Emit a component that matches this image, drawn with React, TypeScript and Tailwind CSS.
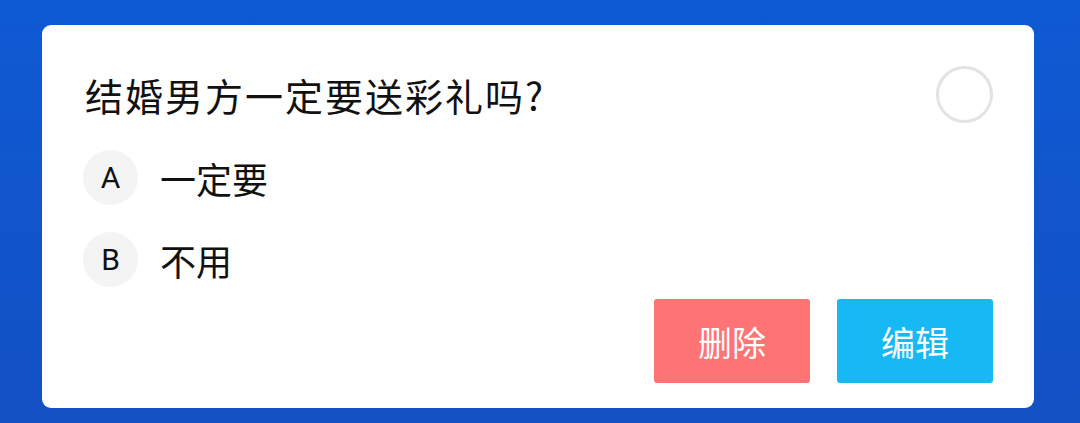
import React from 'react';

const options = [
  { key: 'A', text: '一定要' },
  { key: 'B', text: '不用' },
];

const App: React.FC = () => {
  return (
    <div
      className="w-[1080px] h-[423px] bg-gradient-to-b from-[#0e5ad3] to-[#1350c4] pt-[25px] pl-[42px] pr-[46px]"
      style={{ fontFamily: '"Noto Sans CJK SC", "Noto Sans", sans-serif' }}
    >
      <div className="h-[383px] bg-white rounded-[9px] pt-[41px] pl-[43px] pr-[41px]">
        {/* Question title */}
        <div className="flex items-center justify-between h-[57px]">
          <h2 className="text-[38px] leading-none text-[#111] tracking-[2px]">结婚男方一定要送彩礼吗?</h2>
          <div className="w-[57px] h-[57px] rounded-full border-[3px] border-[#e3e3e3]"></div>
        </div>

        {/* Options */}
        <div className="mt-[27px] flex flex-col gap-[27px] -ml-[2px]">
          {options.map((o) => (
            <div key={o.key} className="flex items-center">
              <div className="w-[55px] h-[55px] rounded-full bg-[#f4f4f4] flex items-center justify-center text-[30px] text-[#111] font-['Roboto']">
                {o.key}
              </div>
              <span className="ml-[22px] text-[36px] leading-none text-[#111]">{o.text}</span>
            </div>
          ))}
        </div>

        {/* Actions */}
        <div className="mt-[12px] flex justify-end gap-[27px]">
          <button className="w-[156px] h-[84px] rounded-[3px] bg-[#fe7373] text-white text-[34px]">删除</button>
          <button className="w-[156px] h-[84px] rounded-[3px] bg-[#17b9f5] text-white text-[34px]">编辑</button>
        </div>
      </div>
    </div>
  );
};

export default App;
